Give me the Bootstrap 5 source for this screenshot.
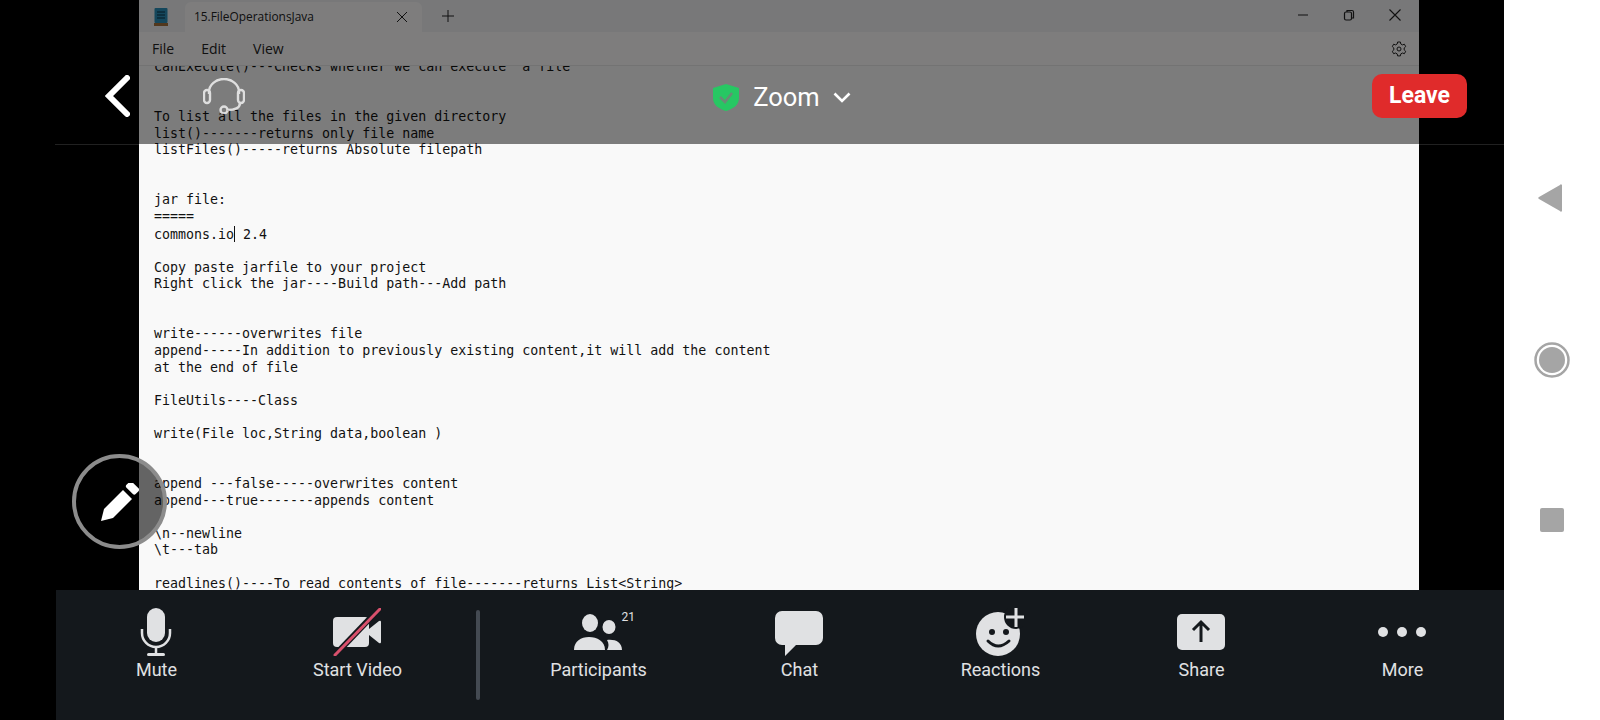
<!DOCTYPE html>
<html lang="en">
<head>
  <meta charset="UTF-8" />
  <meta name="viewport" content="width=device-width, initial-scale=1.0"/>
  <title>Zoom meeting</title>

  <!-- Bootstrap -->
  <link href="https://cdn.jsdelivr.net/npm/bootstrap@5.3.0/dist/css/bootstrap.min.css" rel="stylesheet" />

  <style>
    html, body { height: 720px; overflow: hidden; }
    body { background: #fff; font-family: Roboto, "Liberation Sans", sans-serif; }
    .phone-screen { height: 720px; }

    /* meeting area */
    .stage { width: 1504px; background: #000; }
    .slide-row { height: 590px; padding: 0 85px 0 139px; }
    .slide-sheet { height: 590px; background: #f9f9f9; }

    /* shared notepad window */
    .np-titlebar { height: 32px; background: #f0f0f2; color: #222; font-family: "Open Sans", "Liberation Sans", sans-serif; }
    .np-logo { margin: 8px 0 0 15px; }
    .np-tab { width: 237px; height: 30px; margin: 2px 0 0 17px; padding: 0 14px 0 9px; background: #fcfbfb; border-radius: 6px 6px 0 0; font-size: 11.9px; }
    .np-plus { margin-left: 20px; }
    .np-winbtns { gap: 32px; padding: 8px 17px 0 0; }
    .np-menu { height: 34px; padding: 1px 12px 0 13px; gap: 27px; background: #fdfbfb; border-bottom: 1px solid #e6e6e6; color: #222; font-family: "Open Sans", "Liberation Sans", sans-serif; font-size: 14px; }
    .np-text { margin: -6.6px 0 0; padding-left: 15px; overflow: hidden; color: #111; font-family: "DejaVu Sans Mono", "Liberation Mono", monospace; font-size: 13.3px; line-height: 16.62px; }
    .text-cursor { display: inline-block; width: 0; height: 16px; border-left: 1px solid #111; vertical-align: -3px; }

    /* top bar, lies over the slide */
    .top-shade { top: 0; left: 55px; right: 0; height: 145px; padding: 48px 37px 0 50px; background: rgba(0, 0, 0, .5); background-clip: padding-box; border-bottom: 1px solid rgba(255, 255, 255, .13); color: #fff; }
    .top-side { flex: 1 1 0; }
    .back-link { margin-right: 73px; }
    .meeting-title { margin: 3px 8px 0 0; }
    .meeting-name { font-size: 25.5px; line-height: 1; margin: 0 13px 0 14px; }
    .leave-btn { width: 95px; height: 44px; padding: 0; background: #e02b2b; border: 0; border-radius: 10px; font-size: 23px; font-weight: 700; line-height: 44px; }

    /* floating pencil */
    .pencil-float { left: 72px; top: 454px; width: 95px; height: 95px; border: 4px solid #8c8c8c; border-radius: 50%; background: rgba(0, 0, 0, .6); }

    /* bottom toolbar */
    .tool-bar { height: 130px; margin-left: 56px; background: #14181c; color: #e0e1e3; }
    .tool-item { width: 201px; padding-top: 18px; font-size: 18px; line-height: 22px; }
    .tool-icon { width: 48px; height: 48px; margin: 0 2px 3px 0; }
    .tool-count { top: 2px; left: 48px; font-size: 12px; line-height: 14px; }
    .tool-sep { width: 40px; }
    .tool-sep-line { width: 4px; height: 90px; margin-top: 20px; background: #444a52; border-radius: 2px; }

    /* android navigation */
    .sys-nav { width: 96px; }
    .sys-nav-item { height: 162px; }
    .nav-back { margin-right: 4px; }
    .nav-recent { margin-bottom: 4px; }
  </style>
</head>

<body>
  <div class="phone-screen d-flex">
    <div class="stage position-relative d-flex flex-column">
      <div class="slide-row">
        <div class="slide-sheet d-flex flex-column overflow-hidden">
          <div class="np-titlebar d-flex">
            <svg class="np-logo" width="14" height="18" viewBox="0 0 14 18"><rect x="0.5" y="0" width="13" height="15" rx="1" fill="#2a8fb8"/><rect x="0" y="15" width="14" height="3" fill="#a5713a"/><path d="M3 4h8M3 7h8M3 10h8" stroke="#0c3345" stroke-width="1.2"/></svg>
            <div class="np-tab d-flex align-items-center justify-content-between">
              <span>15.FileOperationsJava</span>
              <svg width="12" height="12" viewBox="0 0 12 12"><path d="M1 1l10 10M11 1L1 11" stroke="#222" stroke-width="1"/></svg>
            </div>
            <svg class="np-plus align-self-center" width="12" height="12" viewBox="0 0 12 12"><path d="M6 0v12M0 6h12" stroke="#222" stroke-width="1"/></svg>
            <div class="np-winbtns d-flex ms-auto">
              <svg width="14" height="14" viewBox="0 0 14 14"><path d="M2 7h10" stroke="#222" stroke-width="1"/></svg>
              <svg width="14" height="14" viewBox="0 0 14 14"><rect x="2.5" y="4" width="7" height="8" rx="1.5" fill="none" stroke="#222" stroke-width="1.2"/><path d="M5 4V2.5h5a1.5 1.5 0 0 1 1.5 1.5v6H10" fill="none" stroke="#222" stroke-width="1.2"/></svg>
              <svg width="14" height="14" viewBox="0 0 14 14"><path d="M1.5 1.5l11 11M12.5 1.5l-11 11" stroke="#222" stroke-width="1.1"/></svg>
            </div>
          </div>
          <div class="np-menu d-flex align-items-center">
            <span>File</span><span>Edit</span><span>View</span>
            <svg class="ms-auto" width="16" height="16" viewBox="0 0 16 16"><path d="M6.6 1h2.8l.4 2 1.6.9 2-.7 1.3 2.4-1.5 1.4v1.9l1.5 1.4-1.3 2.4-2-.7-1.6.9-.4 2H6.6l-.4-2-1.6-.9-2 .7-1.3-2.4 1.5-1.4V7L1.3 5.6l1.3-2.4 2 .7 1.6-.9z" fill="none" stroke="#222" stroke-width="1"/><circle cx="8" cy="8" r="2" fill="none" stroke="#222" stroke-width="1"/></svg>
          </div>
          <div class="overflow-hidden">
<pre class="np-text">canExecute()---Checks whether we can execute  a file


To list all the files in the given directory
list()-------returns only file name
listFiles()-----returns Absolute filepath


jar file:
=====
commons.io<span class="text-cursor"></span> 2.4

Copy paste jarfile to your project
Right click the jar----Build path---Add path


write------overwrites file
append-----In addition to previously existing content,it will add the content
at the end of file

FileUtils----Class

write(File loc,String data,boolean )


append ---false-----overwrites content
append---true-------appends content

\n--newline
\t---tab

readlines()----To read contents of file-------returns List&lt;String&gt;</pre>
          </div>
        </div>
      </div>

      <div class="tool-bar d-flex">
        <div class="tool-item d-flex flex-column align-items-center">
          <svg class="tool-icon" viewBox="0 0 48 48"><rect x="15" y="0" width="18" height="34" rx="9" fill="#e0e1e3"/><path d="M10 21v4a14 14 0 0 0 28 0v-4" fill="none" stroke="#e0e1e3" stroke-width="2.5"/><path d="M24 39v7" stroke="#e0e1e3" stroke-width="2.5"/><rect x="15" y="45" width="18" height="3" rx="1.5" fill="#e0e1e3"/></svg>
          <span>Mute</span>
        </div>
        <div class="tool-item d-flex flex-column align-items-center">
          <svg class="tool-icon" viewBox="0 0 48 48"><rect x="0" y="9" width="36" height="30" rx="4" fill="#e0e1e3"/><path d="M36 21l10-8q2-1 2 1v20q0 2-2 1l-10-8z" fill="#e0e1e3"/><path d="M47 0L1 48" stroke="#14181c" stroke-width="6"/><path d="M47 1L2 47" stroke="#d9506c" stroke-width="3" stroke-linecap="round"/></svg>
          <span>Start Video</span>
        </div>
        <div class="tool-sep d-flex justify-content-center"><div class="tool-sep-line"></div></div>
        <div class="tool-item d-flex flex-column align-items-center">
          <div class="tool-icon position-relative">
            <svg class="d-block" width="48" height="48" viewBox="0 0 48 48"><ellipse cx="16" cy="15" rx="8" ry="9" fill="#e0e1e3"/><ellipse cx="35" cy="19" rx="6.5" ry="7" fill="#e0e1e3"/><path d="M0 42c0-9 7-13 15-13s16 4 16 13z" fill="#e0e1e3"/><path d="M33 42c2-3 2-7 0-10 8-1 15 2 15 10z" fill="#e0e1e3"/></svg>
            <span class="tool-count position-absolute">21</span>
          </div>
          <span>Participants</span>
        </div>
        <div class="tool-item d-flex flex-column align-items-center">
          <svg class="tool-icon" viewBox="0 0 48 48"><path d="M7 3h34a7 7 0 0 1 7 7v20a7 7 0 0 1-7 7H21L10 48V37H7a7 7 0 0 1-7-7V10a7 7 0 0 1 7-7z" fill="#e0e1e3"/></svg>
          <span>Chat</span>
        </div>
        <div class="tool-item d-flex flex-column align-items-center">
          <svg class="tool-icon" viewBox="0 0 48 48"><circle cx="22" cy="26" r="22" fill="#e0e1e3"/><circle cx="40" cy="9" r="12" fill="#14181c"/><path d="M40 0v19M30 9h19" stroke="#e0e1e3" stroke-width="3"/><circle cx="16" cy="24" r="3" fill="#14181c"/><circle cx="30" cy="24" r="3" fill="#14181c"/><path d="M12 33q10 10 21 0" fill="none" stroke="#14181c" stroke-width="3" stroke-linecap="round"/></svg>
          <span>Reactions</span>
        </div>
        <div class="tool-item d-flex flex-column align-items-center">
          <svg class="tool-icon" viewBox="0 0 48 48"><rect x="0" y="6" width="48" height="36" rx="5" fill="#e0e1e3"/><path d="M24 34V15M16 22l8-8 8 8" fill="none" stroke="#14181c" stroke-width="3"/></svg>
          <span>Share</span>
        </div>
        <div class="tool-item d-flex flex-column align-items-center">
          <svg class="tool-icon" viewBox="0 0 48 48"><circle cx="5" cy="24" r="5" fill="#e0e1e3"/><circle cx="24" cy="24" r="5" fill="#e0e1e3"/><circle cx="43" cy="24" r="5" fill="#e0e1e3"/></svg>
          <span>More</span>
        </div>
      </div>

      <!-- top bar -->
      <div class="top-shade position-absolute d-flex align-items-center">
        <div class="top-side d-flex align-items-center">
          <svg class="back-link" width="25" height="42" viewBox="0 0 25 42"><path d="M22 3L4 21l18 18" fill="none" stroke="#fff" stroke-width="6" stroke-linecap="round"/></svg>
          <svg width="42" height="36" viewBox="0 0 42 36" opacity=".75"><path d="M6 16V14a15 13 0 0 1 30 0v2" fill="none" stroke="#fff" stroke-width="2.4"/><rect x="1" y="12" width="6" height="13" rx="3" fill="none" stroke="#fff" stroke-width="2.4"/><rect x="35" y="12" width="6" height="13" rx="3" fill="none" stroke="#fff" stroke-width="2.4"/><path d="M37 25c0 5-6 7-13 7" fill="none" stroke="#fff" stroke-width="2.4"/><circle cx="21" cy="32" r="3.5" fill="none" stroke="#fff" stroke-width="2.4"/></svg>
        </div>
        <div class="meeting-title d-flex align-items-center">
          <svg width="26" height="27" viewBox="0 0 26 27"><path d="M13 0l13 4v10c0 7-6 11-13 13C6 25 0 21 0 14V4z" fill="#27c763"/><path d="M7 13l5 5 7-9" fill="none" stroke="#6a8a76" stroke-width="2.5"/></svg>
          <span class="meeting-name">Zoom</span>
          <svg width="18" height="11" viewBox="0 0 18 11"><path d="M1.5 1.5L9 9l7.5-7.5" fill="none" stroke="#fff" stroke-width="2.6"/></svg>
        </div>
        <div class="top-side d-flex justify-content-end">
          <button class="leave-btn btn btn-danger" type="button">Leave</button>
        </div>
      </div>

      <!-- annotate button -->
      <div class="pencil-float position-absolute d-flex align-items-center justify-content-center">
        <svg width="38" height="38" viewBox="0 0 38 38"><path d="M0 38l3-12L22 7l9 9-19 19z" fill="#fff"/><rect x="25" y="1" width="13" height="8" rx="2" transform="rotate(45 31.5 5)" fill="#fff"/></svg>
      </div>
    </div>

    <!-- android navigation -->
    <div class="sys-nav d-flex flex-column justify-content-center">
      <div class="sys-nav-item d-flex align-items-center justify-content-center">
        <svg class="nav-back" width="24" height="28" viewBox="0 0 24 28"><path d="M22 1a1 1 0 0 1 2 1v24a1 1 0 0 1-2 1L1 15a1.2 1.2 0 0 1 0-2z" fill="#a5a5a5"/></svg>
      </div>
      <div class="sys-nav-item d-flex align-items-center justify-content-center">
        <svg width="36" height="36" viewBox="0 0 36 36"><circle cx="18" cy="18" r="16.5" fill="none" stroke="#a5a5a5" stroke-width="2.5"/><circle cx="18" cy="18" r="13" fill="#a5a5a5"/></svg>
      </div>
      <div class="sys-nav-item d-flex align-items-center justify-content-center">
        <svg class="nav-recent" width="24" height="24" viewBox="0 0 24 24"><rect width="24" height="24" rx="2" fill="#a5a5a5"/></svg>
      </div>
    </div>
  </div>

  <script src="https://cdn.jsdelivr.net/npm/bootstrap@5.3.0/dist/js/bootstrap.bundle.min.js"></script>
</body>
</html>
